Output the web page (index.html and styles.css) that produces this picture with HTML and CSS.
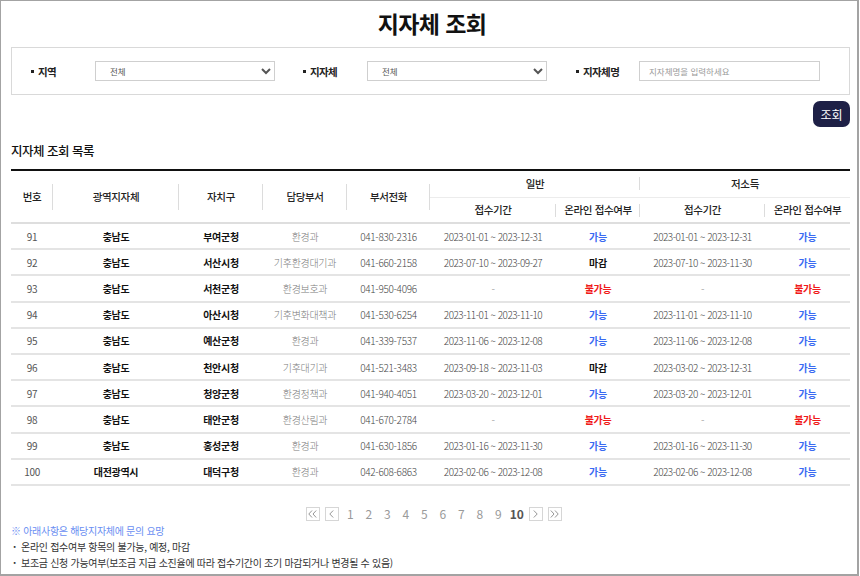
FILE: index.html
```html
<!DOCTYPE html>
<html lang="ko">
<head>
<meta charset="utf-8">
<title>지자체 조회</title>
<link rel="stylesheet" href="styles.css">
</head>
<body>
<div class="frame">
  <h1 class="title">지자체 조회</h1>

  <div class="filter">
    <div class="field field-region">
      <span class="label">지역</span>
      <select class="select"><option>전체</option></select>
    </div>
    <div class="field field-city">
      <span class="label">지자체</span>
      <select class="select"><option>전체</option></select>
    </div>
    <div class="field field-name">
      <span class="label">지자체명</span>
      <input class="input" type="text" placeholder="지자체명을 입력하세요">
    </div>
  </div>

  <div class="actions">
    <button class="btn" type="button">조회</button>
  </div>

  <h2 class="subtitle">지자체 조회 목록</h2>

  <table class="grid">
    <colgroup>
      <col style="width:42px"><col style="width:126px"><col style="width:84px"><col style="width:84px"><col style="width:83px">
      <col style="width:126px"><col style="width:84px"><col style="width:125px"><col style="width:85px">
    </colgroup>
    <thead>
      <tr class="h1row">
        <th rowspan="2" class="sep-tall">번호</th>
        <th rowspan="2" class="sep-tall">광역지자체</th>
        <th rowspan="2" class="sep-tall">자치구</th>
        <th rowspan="2" class="sep-tall">담당부서</th>
        <th rowspan="2" class="sep-tall">부서전화</th>
        <th colspan="2" class="group sep-short">일반</th>
        <th colspan="2" class="group">저소득</th>
      </tr>
      <tr class="h2row">
        <th class="sep-short">접수기간</th>
        <th class="sep-short">온라인 접수여부</th>
        <th class="sep-short">접수기간</th>
        <th>온라인 접수여부</th>
      </tr>
    </thead>
    <tbody>
      <tr><td class="num">91</td><td class="strong">충남도</td><td class="strong">부여군청</td><td class="dept">환경과</td><td class="tel">041-830-2316</td><td class="date">2023-01-01 ~ 2023-12-31</td><td class="ok">가능</td><td class="date">2023-01-01 ~ 2023-12-31</td><td class="ok">가능</td></tr>
      <tr><td class="num">92</td><td class="strong">충남도</td><td class="strong">서산시청</td><td class="dept">기후환경대기과</td><td class="tel">041-660-2158</td><td class="date">2023-07-10 ~ 2023-09-27</td><td class="closed">마감</td><td class="date">2023-07-10 ~ 2023-11-30</td><td class="ok">가능</td></tr>
      <tr><td class="num">93</td><td class="strong">충남도</td><td class="strong">서천군청</td><td class="dept">환경보호과</td><td class="tel">041-950-4096</td><td class="dash">-</td><td class="no">불가능</td><td class="dash">-</td><td class="no">불가능</td></tr>
      <tr><td class="num">94</td><td class="strong">충남도</td><td class="strong">아산시청</td><td class="dept">기후변화대책과</td><td class="tel">041-530-6254</td><td class="date">2023-11-01 ~ 2023-11-10</td><td class="ok">가능</td><td class="date">2023-11-01 ~ 2023-11-10</td><td class="ok">가능</td></tr>
      <tr><td class="num">95</td><td class="strong">충남도</td><td class="strong">예산군청</td><td class="dept">환경과</td><td class="tel">041-339-7537</td><td class="date">2023-11-06 ~ 2023-12-08</td><td class="ok">가능</td><td class="date">2023-11-06 ~ 2023-12-08</td><td class="ok">가능</td></tr>
      <tr><td class="num">96</td><td class="strong">충남도</td><td class="strong">천안시청</td><td class="dept">기후대기과</td><td class="tel">041-521-3483</td><td class="date">2023-09-18 ~ 2023-11-03</td><td class="closed">마감</td><td class="date">2023-03-02 ~ 2023-12-31</td><td class="ok">가능</td></tr>
      <tr><td class="num">97</td><td class="strong">충남도</td><td class="strong">청양군청</td><td class="dept">환경정책과</td><td class="tel">041-940-4051</td><td class="date">2023-03-20 ~ 2023-12-01</td><td class="ok">가능</td><td class="date">2023-03-20 ~ 2023-12-01</td><td class="ok">가능</td></tr>
      <tr><td class="num">98</td><td class="strong">충남도</td><td class="strong">태안군청</td><td class="dept">환경산림과</td><td class="tel">041-670-2784</td><td class="dash">-</td><td class="no">불가능</td><td class="dash">-</td><td class="no">불가능</td></tr>
      <tr><td class="num">99</td><td class="strong">충남도</td><td class="strong">홍성군청</td><td class="dept">환경과</td><td class="tel">041-630-1856</td><td class="date">2023-01-16 ~ 2023-11-30</td><td class="ok">가능</td><td class="date">2023-01-16 ~ 2023-11-30</td><td class="ok">가능</td></tr>
      <tr><td class="num">100</td><td class="strong">대전광역시</td><td class="strong">대덕구청</td><td class="dept">환경과</td><td class="tel">042-608-6863</td><td class="date">2023-02-06 ~ 2023-12-08</td><td class="ok">가능</td><td class="date">2023-02-06 ~ 2023-12-08</td><td class="ok">가능</td></tr>
    </tbody>
  </table>

  <div class="pager">
    <span class="pbox"><svg width="9" height="8" viewBox="0 0 9 8"><polyline points="4,0.5 0.8,4 4,7.5" /><polyline points="8.2,0.5 5,4 8.2,7.5" /></svg></span>
    <span class="pbox"><svg width="5" height="8" viewBox="0 0 5 8"><polyline points="4.2,0.5 0.8,4 4.2,7.5" /></svg></span>
    <span class="pnum">1</span><span class="pnum">2</span><span class="pnum">3</span><span class="pnum">4</span><span class="pnum">5</span>
    <span class="pnum">6</span><span class="pnum">7</span><span class="pnum">8</span><span class="pnum">9</span><span class="pnum current">10</span>
    <span class="pbox"><svg width="5" height="8" viewBox="0 0 5 8"><polyline points="0.8,0.5 4.2,4 0.8,7.5" /></svg></span>
    <span class="pbox"><svg width="9" height="8" viewBox="0 0 9 8"><polyline points="0.8,0.5 4,4 0.8,7.5" /><polyline points="5,0.5 8.2,4 5,7.5" /></svg></span>
  </div>

  <div class="notes">
    <p class="note-head">※ 아래사항은 해당지자체에 문의 요망</p>
    <p class="note"><span class="dot">·</span>온라인 접수여부 항목의 불가능, 예정, 마감</p>
    <p class="note"><span class="dot">·</span>보조금 신청 가능여부(보조금 지급 소진율에 따라 접수기간이 조기 마감되거나 변경될 수 있음)</p>
  </div>
</div>
</body>
</html>
```

FILE: styles.css
```css
* { box-sizing: border-box; }
html, body { margin: 0; padding: 0; background: #fff; }
body {
  font-family: "Noto Sans CJK KR", "Noto Sans", sans-serif;
  color: #222;
}
.frame {
  width: 859px;
  height: 576px;
  border: 1px solid #a3a3a3;
  border-bottom-width: 2px;
  border-right-width: 2px;
  padding: 0 7px 0 10px;
  overflow: hidden;
}
.title {
  margin: 0;
  height: 46px;
  line-height: 44px;
  text-align: center;
  font-size: 23px;
  font-weight: 700;
  color: #111;
  letter-spacing: -0.6px;
  padding-left: 3px;
}
.filter {
  display: flex;
  align-items: center;
  height: 48px;
  border: 1px solid #d9d9d9;
  padding: 0 0 0 19px;
}
.field { display: flex; align-items: center; }
.label {
  display: flex;
  align-items: center;
  font-size: 10.5px;
  font-weight: 700;
  color: #222;
  letter-spacing: -0.6px;
}
.label::before {
  content: "";
  width: 3px;
  height: 3px;
  background: #222;
  margin-right: 4px;
}
.field-region .label { width: 64px; }
.field-city { margin-left: 28px; }
.field-city .label { width: 64px; }
.field-name { margin-left: 29px; }
.field-name .label { width: 63px; }
.select {
  width: 180px;
  height: 20px;
  border: 1px solid #cfcfcf;
  border-radius: 0;
  background: #fff;
  font-family: inherit;
  font-size: 8.5px;
  color: #555;
  padding: 0 6px 0 10px;
}
.input {
  width: 181px;
  height: 20px;
  border: 1px solid #cfcfcf;
  font-family: inherit;
  font-size: 8.5px;
  padding: 0 9px;
  color: #333;
}
.input::placeholder { color: #999; }
.actions {
  display: flex;
  justify-content: flex-end;
  padding-top: 6px;
}
.btn {
  width: 37px;
  height: 26px;
  border: 0;
  border-radius: 7px;
  background: #1e2046;
  color: #fff;
  font-family: inherit;
  font-size: 12px;
  padding: 0;
}
.subtitle {
  margin: 0;
  height: 42px;
  line-height: 48px;
  font-size: 12.5px;
  font-weight: 500;
  color: #111;
  letter-spacing: -0.5px;
}
.grid {
  width: 839px;
  border-collapse: collapse;
  table-layout: fixed;
  border-top: 2px solid #111;
}
.grid th {
  position: relative;
  font-size: 10.5px;
  font-weight: 500;
  color: #222;
  letter-spacing: -0.4px;
  padding: 0;
  text-align: center;
}
.h1row th { height: 27px; }
.h2row th { height: 26px; border-bottom: 2px solid #dedede; }
.h1row th.sep-tall { border-bottom: 2px solid #dedede; }
.h1row th.group { border-bottom: 1px solid #ececec; }
.sep-tall::after, .sep-short::after {
  content: "";
  position: absolute;
  right: 0;
  width: 1px;
  background: #dcdcdc;
}
.sep-tall::after { top: 13px; height: 26px; }
.sep-short::after { top: 6px; height: 13px; }
.grid td {
  height: 26.2px;
  padding: 0;
  text-align: center;
  font-size: 10px;
  border-bottom: 2px solid #e4e4e4;
  letter-spacing: -0.3px;
  white-space: nowrap;
}
.num { color: #555; }
.strong { font-weight: 700; color: #111; }
.dept { color: #7a7a7a; font-weight: 300; }
.tel { color: #444; font-weight: 300; letter-spacing: -0.45px; }
.grid td.date { color: #444; font-weight: 300; letter-spacing: -0.5px; }
.dash { color: #aaa; }
.ok { color: #3a6af2; font-weight: 700; }
.closed { color: #111; font-weight: 700; }
.no { color: #f01a1a; font-weight: 700; }
.pager {
  display: flex;
  justify-content: center;
  align-items: center;
  margin-top: 20px;
  padding-left: 6px;
  height: 16px;
}
.pbox {
  display: inline-flex;
  align-items: center;
  justify-content: center;
  width: 14px;
  height: 14px;
  border: 1px solid #d6d6d6;
  margin: 0 2.5px;
}
.pbox svg polyline {
  fill: none;
  stroke: #8a8a8a;
  stroke-width: 0.9;
}
.pnum {
  width: 18.5px;
  text-align: center;
  font-size: 12px;
  color: #9a9a9a;
}
.pnum.current { font-weight: 700; color: #555; }
.notes { margin-top: 1px; }
.notes p {
  margin: 0;
  font-size: 10px;
  line-height: 16px;
  letter-spacing: -0.3px;
}
.note-head { color: #6a8ef2; }
.note { color: #333; }
.dot {
  display: inline-block;
  width: 8px;
  margin-left: 2px;
  font-weight: 700;
}
```
